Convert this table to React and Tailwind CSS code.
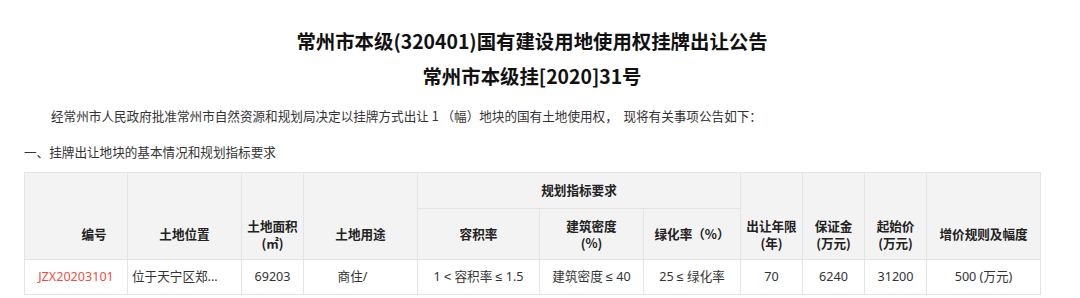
import React from "react";

const font = { fontFamily: '"Noto Sans CJK SC", "Noto Sans", sans-serif' };
const dataFont = { fontFamily: '"Noto Sans", "Noto Sans CJK SC", sans-serif' };
const symFont = { fontFamily: '"Liberation Sans", "DejaVu Sans", sans-serif' };

function Le() {
  return <span style={symFont}>≤</span>;
}

function HCell({ children, className = "", ...rest }) {
  return (
    <th
      className={"border border-[#e4e4e4] bg-[#f3f3f3] font-bold text-[#222] text-center align-middle p-0 " + className}
      {...rest}
    >
      {children}
    </th>
  );
}

function SpanCell({ children, className = "" }) {
  return (
    <th
      rowSpan={2}
      className="border border-[#e4e4e4] bg-[#f3f3f3] font-bold text-[#222] text-center align-bottom p-0"
    >
      <div className={"h-[51px] flex flex-col items-center justify-center leading-[17px] " + className}>
        {children}
      </div>
    </th>
  );
}

function DCell({ children, className = "" }) {
  return (
    <td
      className={"border border-[#e4e4e4] bg-white text-[#333] text-center align-middle p-0 h-[35px] whitespace-nowrap " + className}
      style={dataFont}
    >
      {children}
    </td>
  );
}

export default function App() {
  return (
    <div className="w-[1080px] h-[298px] bg-white overflow-hidden" style={font}>
      <div className="w-[1016px] ml-[24px] pt-[24px]">
        <div className="text-center font-bold text-[19.4px] leading-[34.5px] text-[#111]">
          <div>常州市本级(320401)国有建设用地使用权挂牌出让公告</div>
          <div>常州市本级挂[2020]31号</div>
        </div>
        <p className="mt-[11px] text-[12.6px] leading-[24px] text-[#333] indent-[27px] whitespace-pre">
          {"经常州市人民政府批准常州市自然资源和规划局决定以挂牌方式出让 1 （幅）地块的国有土地使用权，\u00a0\u00a0现将有关事项公告如下："}
        </p>
        <p className="mt-[12px] text-[12.6px] leading-[24px] text-[#333]">
          一、挂牌出让地块的基本情况和规划指标要求
        </p>
        <table className="mt-[8px] table-fixed border-collapse w-[1016px] text-[12.6px]">
          <colgroup>
            <col className="w-[103px]" />
            <col className="w-[114px]" />
            <col className="w-[62px]" />
            <col className="w-[114px]" />
            <col className="w-[122px]" />
            <col className="w-[104px]" />
            <col className="w-[97px]" />
            <col className="w-[62px]" />
            <col className="w-[62px]" />
            <col className="w-[62px]" />
            <col className="w-[114px]" />
          </colgroup>
          <thead>
            <tr className="h-[36px]">
              <SpanCell className="pl-[36px]">编号</SpanCell>
              <SpanCell>土地位置</SpanCell>
              <SpanCell>
                <span>土地面积</span>
                <span>(㎡)</span>
              </SpanCell>
              <SpanCell>土地用途</SpanCell>
              <HCell colSpan={3}>规划指标要求</HCell>
              <SpanCell>
                <span>出让年限</span>
                <span>(年)</span>
              </SpanCell>
              <SpanCell>
                <span>保证金</span>
                <span>(万元)</span>
              </SpanCell>
              <SpanCell>
                <span>起始价</span>
                <span>(万元)</span>
              </SpanCell>
              <SpanCell>增价规则及幅度</SpanCell>
            </tr>
            <tr className="h-[51px]">
              <HCell>容积率</HCell>
              <HCell className="leading-[17px]">
                <div>建筑密度</div>
                <div>(%)</div>
              </HCell>
              <HCell>绿化率（%）</HCell>
            </tr>
          </thead>
          <tbody>
            <tr>
              <DCell className="text-[#f2503e]">JZX20203101</DCell>
              <DCell className="text-left pl-[4px] overflow-hidden">位于天宁区郑...</DCell>
              <DCell>69203</DCell>
              <DCell className="pr-[16px]">商住/</DCell>
              <DCell>
                1 <span style={symFont}>&lt;</span> 容积率 <Le /> 1.5
              </DCell>
              <DCell>
                建筑密度 <Le /> 40
              </DCell>
              <DCell>
                25 <Le /> 绿化率
              </DCell>
              <DCell>70</DCell>
              <DCell>6240</DCell>
              <DCell>31200</DCell>
              <DCell>500 (万元)</DCell>
            </tr>
          </tbody>
        </table>
      </div>
    </div>
  );
}
